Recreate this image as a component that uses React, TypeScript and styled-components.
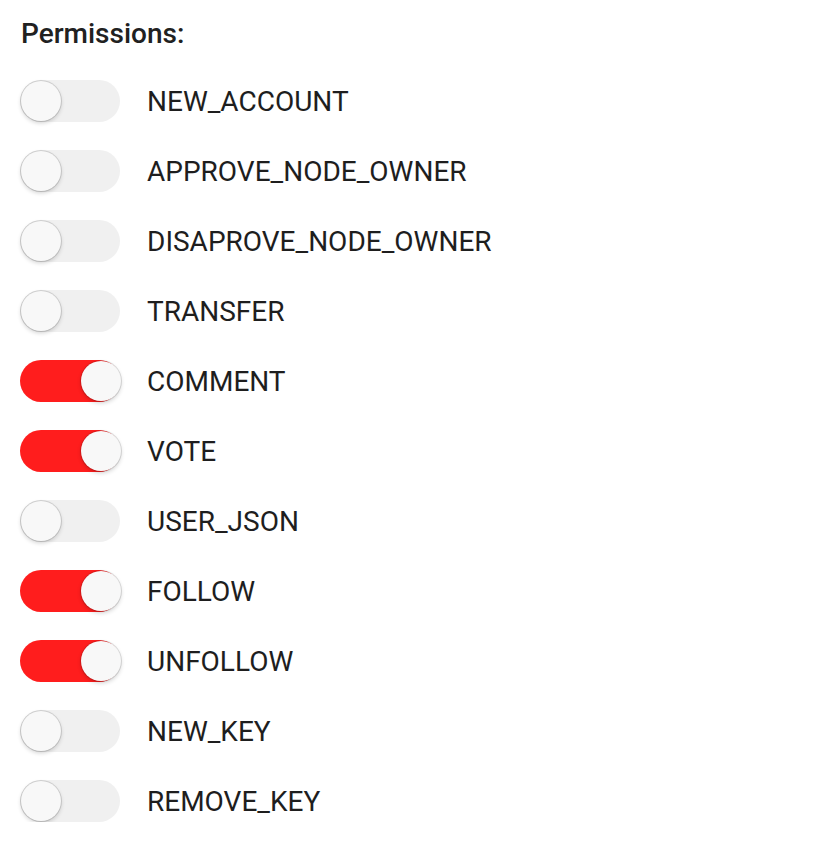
import React, { useState } from "react";
import styled, { createGlobalStyle } from "styled-components";

const Global = createGlobalStyle`
  html, body { margin: 0; padding: 0; background: #ffffff; }
  body { font-family: Roboto, "Liberation Sans", sans-serif; color: #212121; }
`;

const Page = styled.div`
  padding: 14px 20px 0 20px;
  display: flex;
  flex-direction: column;
`;

const Title = styled.h3`
  margin: 0 0 0 1px;
  font-size: 28px;
  font-weight: 500;
  line-height: 40px;
  color: #212121;
`;

const List = styled.div`
  display: flex;
  flex-direction: column;
  gap: 28px;
  margin-top: 26px;
`;

const Row = styled.label`
  display: flex;
  align-items: center;
  gap: 27px;
  height: 42px;
  cursor: pointer;
`;

const Track = styled.span<{ $on: boolean }>`
  position: relative;
  flex: none;
  width: 100px;
  height: 42px;
  border-radius: 21px;
  background: ${(p) => (p.$on ? "#ff1d1d" : "#f0f0f0")};
`;

const Knob = styled.span<{ $on: boolean }>`
  position: absolute;
  top: 1px;
  left: 1px;
  width: 40px;
  height: 40px;
  border-radius: 50%;
  background: #f8f8f8;
  box-shadow: 0 0 0 1px rgba(0, 0, 0, 0.12), 0 2px 4px rgba(0, 0, 0, 0.18);
  transform: translateX(${(p) => (p.$on ? "60px" : "0")});
`;

const Label = styled.span`
  font-size: 28px;
  font-weight: 400;
  line-height: 42px;
  padding-top: 1px;
  color: #1e1e1e;
`;

const perms: [string, boolean][] = [
  ["NEW_ACCOUNT", false],
  ["APPROVE_NODE_OWNER", false],
  ["DISAPROVE_NODE_OWNER", false],
  ["TRANSFER", false],
  ["COMMENT", true],
  ["VOTE", true],
  ["USER_JSON", false],
  ["FOLLOW", true],
  ["UNFOLLOW", true],
  ["NEW_KEY", false],
  ["REMOVE_KEY", false],
];

export default function App() {
  const [state, setState] = useState(perms);
  return (
    <Page>
      <Global />
      <Title>Permissions:</Title>
      <List>
        {state.map(([name, on], i) => (
          <Row
            key={name}
            onClick={() =>
              setState((s) => s.map((x, j) => (j === i ? [x[0], !x[1]] : x)))
            }
          >
            <Track $on={on}>
              <Knob $on={on} />
            </Track>
            <Label>{name}</Label>
          </Row>
        ))}
      </List>
    </Page>
  );
}
